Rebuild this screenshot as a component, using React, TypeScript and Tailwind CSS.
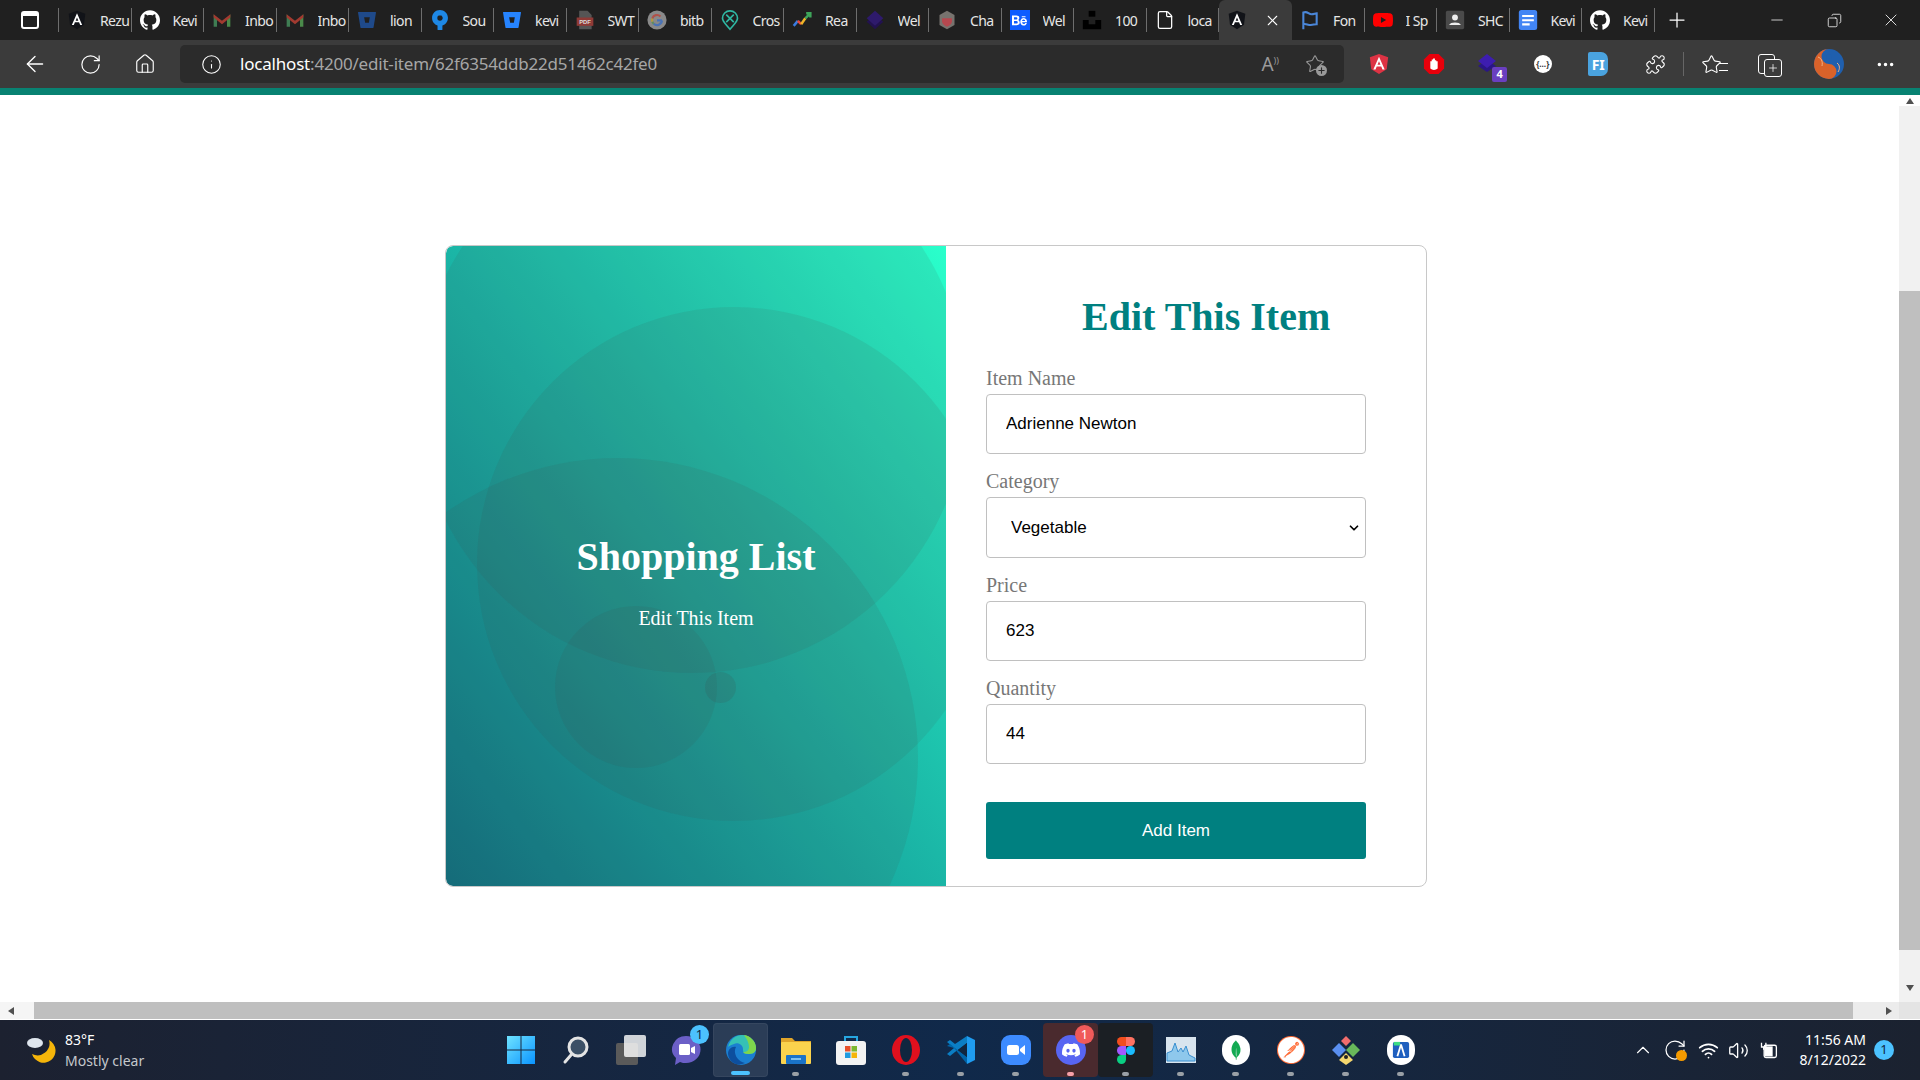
import type { ReactNode } from 'react'
import {
  ArrowLeft,
  ChevronDown,
  ChevronUp,
  Copy,
  File,
  Home,
  Info,
  Minus,
  MoreHorizontal,
  Plus,
  Puzzle,
  RotateCw,
  Star,
  Volume2,
  Wifi,
  X,
} from 'lucide-react'
import { SiBehance, SiBitbucket, SiDiscord, SiGithub, SiMongodb, SiPostman, SiSourcetree, SiYoutube } from 'react-icons/si'

function AngularShield({ bg, className }: { bg: string; className: string }) {
  return (
    <svg viewBox="0 0 24 24" className={className}>
      <path d="M12 1L2 4.5l1.6 13.2L12 23l8.4-5.3L22 4.5z" fill={bg} />
      <path d="M12 4l-6.2 14h2.4l1.3-3.2h5l1.3 3.2h2.4zM10.4 12.8L12 8.9l1.6 3.9z" fill="#fff" />
    </svg>
  )
}

function AngularMono() {
  return <AngularShield bg="#111318" className="h-[22px] w-[20px]" />
}

function Gmail() {
  return (
    <svg viewBox="0 0 24 24" className="h-[20px] w-[20px]">
      <path d="M2 5v15h4V10z" fill="#3f7d53" />
      <path d="M22 5v15h-4V10z" fill="#4a8a4a" />
      <path d="M2 5l10 8 10-8v4l-10 8L2 9z" fill="#a23a30" />
    </svg>
  )
}

function BucketIcon({ color }: { color: string }) {
  return <SiBitbucket className="h-[18px] w-[18px]" style={{ color }} />
}

function PdfIcon() {
  return (
    <svg viewBox="0 0 24 24" className="h-[20px] w-[20px]">
      <path d="M5 1h10l5 5v17H5z" fill="#555" />
      <rect x="2" y="9" width="20" height="10" fill="#8f3a36" />
      <text x="12" y="17" fontSize="7" fontWeight="700" textAnchor="middle" fill="#ddd" fontFamily="Liberation Sans">PDF</text>
    </svg>
  )
}

function GoogleDim() {
  return (
    <svg viewBox="0 0 24 24" className="h-[20px] w-[20px]">
      <circle cx="12" cy="12" r="11.5" fill="#8a8a8a" />
      <path d="M18 12.5h-6M18 12.5a6 6 0 0 1-10 4" fill="none" stroke="#4b73b5" strokeWidth="2.6" />
      <path d="M8 16.5a6 6 0 0 1-1.6-2.5" fill="none" stroke="#5d8c5f" strokeWidth="2.6" />
      <path d="M6.4 14a6 6 0 0 1 0-4" fill="none" stroke="#b59a3e" strokeWidth="2.6" />
      <path d="M6.4 10a6 6 0 0 1 9.8-2.3" fill="none" stroke="#b0524a" strokeWidth="2.6" />
    </svg>
  )
}

function CrossIcon() {
  return (
    <svg viewBox="0 0 24 24" className="h-[22px] w-[22px]" fill="none" stroke="#2fb7a3" strokeWidth="2">
      <path d="M12 23C7 17 3 14 3 10a9 9 0 0 1 18 0c0 4-4 7-9 13z" />
      <path d="M7.5 5.5l9 9M16.5 5.5l-9 9" />
    </svg>
  )
}

function TrendIcon() {
  return (
    <svg viewBox="0 0 24 24" className="h-[20px] w-[20px]" fill="none" strokeWidth="3">
      <path d="M2 19l5-6" stroke="#3a7be0" />
      <path d="M7 13l4 4" stroke="#e8463a" />
      <path d="M11 17l5-7" stroke="#f0b429" />
      <path d="M16 10l6-6M17 4h5v5" stroke="#3ea55a" />
    </svg>
  )
}

function LayersIcon() {
  return (
    <svg viewBox="0 0 24 24" className="h-[22px] w-[22px]">
      <path d="M12 6l10 8-10 9-10-9z" fill="#22124f" />
      <path d="M12 1l10 9-10 9-10-9z" fill="#2e1a6b" />
    </svg>
  )
}

function HexIcon() {
  return (
    <svg viewBox="0 0 24 24" className="h-[22px] w-[22px]">
      <path d="M12 1l9 5v12l-9 5-9-5V6z" fill="#77736e" />
      <path d="M6 10h12v3c0 4-3 6-6 7-3-1-6-3-6-7z" fill="#b5484f" />
    </svg>
  )
}

function HundredIcon() {
  return (
    <svg viewBox="0 0 24 24" className="h-[20px] w-[20px]">
      <rect x="8" y="1" width="8" height="7" fill="#000" />
      <path d="M1 12h7v5h8v-5h7v11H1z" fill="#000" />
    </svg>
  )
}

function FlagIcon() {
  return (
    <svg viewBox="0 0 24 24" className="h-[20px] w-[20px]" fill="none" stroke="#4a86d8" strokeWidth="2.5">
      <path d="M4 23V3c5-2 6 2 10 2 3 0 4-1 6-1v13c-3 0-4 1-7 1-4 0-6-2-9-1" />
    </svg>
  )
}

function ContactIcon() {
  return (
    <svg viewBox="0 0 24 24" className="h-[20px] w-[20px]">
      <rect x="1" y="1" width="22" height="22" rx="2" fill="#4a4a4a" />
      <circle cx="12" cy="9" r="3.5" fill="#eee" />
      <path d="M5 18c1-4 13-4 14 0z" fill="#eee" />
    </svg>
  )
}

function DocsIcon() {
  return (
    <svg viewBox="0 0 24 24" className="h-[22px] w-[22px]">
      <rect x="1" y="0" width="22" height="24" rx="3" fill="#4285f4" />
      <path d="M5 6h14v2.5H5zM5 11h14v2.5H5zM5 16h9v2.5H5z" fill="#fff" />
    </svg>
  )
}

type Tab = { icon: ReactNode; title?: string }

const tabsLeft: Tab[] = [
  { icon: <AngularMono />, title: 'Rezu' },
  { icon: <SiGithub className="h-[20px] w-[20px] text-white" />, title: 'Kevi' },
  { icon: <Gmail />, title: 'Inbo' },
  { icon: <Gmail />, title: 'Inbo' },
  { icon: <BucketIcon color="#1f4a8a" />, title: 'lion' },
  { icon: <SiSourcetree className="h-[20px] w-[20px] text-[#1e88e5]" />, title: 'Sou' },
  { icon: <BucketIcon color="#2684ff" />, title: 'kevi' },
  { icon: <PdfIcon />, title: 'SWT' },
  { icon: <GoogleDim />, title: 'bitb' },
  { icon: <CrossIcon />, title: 'Cros' },
  { icon: <TrendIcon />, title: 'Rea' },
  { icon: <LayersIcon />, title: 'Wel' },
  { icon: <HexIcon />, title: 'Cha' },
  {
    icon: (
      <span className="flex h-[20px] w-[20px] items-center justify-center bg-[#0d5cff]">
        <SiBehance className="h-[15px] w-[15px] text-white" />
      </span>
    ),
    title: 'Wel',
  },
  { icon: <HundredIcon />, title: '100' },
  { icon: <File className="h-[22px] w-[20px] text-white" strokeWidth={1.5} />, title: 'loca' },
]

const tabsRight: Tab[] = [
  { icon: <FlagIcon />, title: 'Fon' },
  { icon: <SiYoutube className="h-[20px] w-[20px] text-[#f00]" />, title: 'I Sp' },
  { icon: <ContactIcon />, title: 'SHC' },
  { icon: <DocsIcon />, title: 'Kevi' },
  { icon: <SiGithub className="h-[20px] w-[20px] text-white" />, title: 'Kevi' },
]

function TabItem({ tab }: { tab: Tab }) {
  return (
    <div className="flex h-[40px] w-[72.5px] shrink-0 items-center pl-[8px]">
      <span className="flex w-[20px] shrink-0 justify-center">{tab.icon}</span>
      <span className="ml-[13px] w-[30px] overflow-hidden whitespace-nowrap text-[14px] tracking-[-0.6px] text-[#e6e6e6]">{tab.title}</span>
      <span className="ml-[1px] h-[24px] w-px shrink-0 bg-[#6e6e6e]" />
    </div>
  )
}

function TabStrip() {
  return (
    <div className="flex h-[40px] shrink-0 items-center bg-[#202020]">
      <div className="flex h-[40px] w-[59px] shrink-0 items-center">
        <span className="ml-[21px] h-[18px] w-[18px] rounded-[3px] border-2 border-white">
          <span className="block h-[3px] bg-white" />
        </span>
        <span className="ml-[19px] h-[24px] w-px bg-[#6e6e6e]" />
      </div>
      {tabsLeft.map((tab, i) => (
        <TabItem key={i} tab={tab} />
      ))}
      <div className="flex h-[40px] w-[73px] shrink-0 items-center rounded-t-[6px] bg-[#3b3b3b] pl-[8px]">
        <AngularMono />
        <X className="ml-[17px] h-[17px] w-[17px] text-white" strokeWidth={1.5} />
      </div>
      {tabsRight.map((tab, i) => (
        <TabItem key={i} tab={tab} />
      ))}
      <Plus className="ml-[10px] h-[24px] w-[24px] text-white" strokeWidth={1.25} />
      <div className="ml-auto flex items-center">
        <Minus className="h-[18px] w-[18px] text-white" strokeWidth={1} />
        <Copy className="ml-[41px] h-[15px] w-[15px] scale-x-[-1] text-white" strokeWidth={1.25} />
        <X className="ml-[39px] mr-[19px] h-[20px] w-[20px] text-white" strokeWidth={1} />
      </div>
    </div>
  )
}

function ExtIcon({ children }: { children: ReactNode }) {
  return <span className="flex w-[54.5px] shrink-0 justify-center">{children}</span>
}

function ProfileOrb() {
  return (
    <svg viewBox="0 0 30 30" className="ml-[39px] h-[30px] w-[30px]">
      <circle cx="15" cy="15" r="15" fill="#1f5fae" />
      <path d="M15 0a15 15 0 0 0 0 30 7.5 7.5 0 0 0 0-15 7.5 7.5 0 0 1 0-15z" fill="#d9622a" />
      <circle cx="15" cy="7.5" r="2.5" fill="#1f5fae" />
      <circle cx="15" cy="22.5" r="2.5" fill="#d9622a" />
      <path d="M4 8c3 1 5 4 4 9M23 14c3 2 3 6 1 9" fill="none" stroke="#f4b183" strokeWidth="1" />
    </svg>
  )
}

function Toolbar() {
  return (
    <div className="flex h-[48px] shrink-0 items-center bg-[#3b3b3b]">
      <ArrowLeft className="ml-[22px] h-[26px] w-[26px] text-white" strokeWidth={1.25} />
      <RotateCw className="ml-[31px] h-[23px] w-[23px] text-white" strokeWidth={1.25} />
      <Home className="ml-[32px] h-[22px] w-[22px] text-white" strokeWidth={1.25} />
      <div className="ml-[24px] flex h-[38px] w-[1164px] shrink-0 items-center rounded-[5px] bg-[#2b2b2b]">
        <Info className="ml-[21px] h-[21px] w-[21px] text-white" strokeWidth={1.25} />
        <span className="ml-[18px] whitespace-nowrap font-['Noto_Sans',sans-serif] text-[17px] tracking-[-0.2px] text-[#a6a6a6]">
          <span className="text-white">localhost</span>:4200/edit-item/62f6354ddb22d51462c42fe0
        </span>
        <span className="ml-auto text-[19px] leading-none text-[#9a9a9a]">A<span className="align-super text-[9px]">))</span></span>
        <span className="relative ml-[26px] mr-[19px]">
          <Star className="h-[20px] w-[20px] text-[#9a9a9a]" strokeWidth={1.25} />
          <span className="absolute -right-[2px] -bottom-[2px] flex h-[11px] w-[11px] items-center justify-center rounded-full bg-[#9a9a9a]">
            <Plus className="h-[9px] w-[9px] text-[#2b2b2b]" strokeWidth={3} />
          </span>
        </span>
      </div>
      <div className="ml-[8px] flex items-center">
        <ExtIcon>
          <AngularShield bg="#dd3344" className="h-[24px] w-[22px]" />
        </ExtIcon>
        <ExtIcon>
          <svg viewBox="0 0 24 24" className="h-[22px] w-[22px]">
            <path d="M7 1h10l6 6v10l-6 6H7l-6-6V7z" fill="#e8000b" />
            <path d="M8 17V9h1.5v-2H11v-1h2v2h1.5v1H16v8c-2 2-6 2-8 0z" fill="#fff" />
          </svg>
        </ExtIcon>
        <ExtIcon>
          <span className="relative">
            <svg viewBox="0 0 24 24" className="h-[24px] w-[24px]">
              <path d="M2 14l9-6 9 6-9 6z" fill="#2a1685" />
              <path d="M2 9l9-7 9 7-9 7z" fill="#3d1db0" />
            </svg>
            <span className="absolute -right-[7px] -bottom-[6px] flex h-[15px] w-[15px] items-center justify-center rounded-[2px] bg-[#6a3fc0] text-[11px] font-bold text-white">4</span>
          </span>
        </ExtIcon>
        <ExtIcon>
          <span className="flex h-[18px] w-[18px] items-center justify-center rounded-full bg-white text-[8px] font-bold text-[#333]">{'{…}'}</span>
        </ExtIcon>
        <ExtIcon>
          <span className="ml-[2px] flex h-[24px] w-[20px] items-center justify-center rounded-l-[2px] rounded-r-[7px] bg-[#4aa3df] text-[14px] font-bold text-white">FI</span>
        </ExtIcon>
        <ExtIcon>
          <Puzzle className="ml-[7px] h-[21px] w-[21px] text-white" strokeWidth={1.25} />
        </ExtIcon>
        <span className="mx-[4px] h-[24px] w-px bg-[#666]" />
        <span className="relative ml-[13px]">
          <Star className="h-[21px] w-[21px] text-white" strokeWidth={1.25} />
          <span className="absolute -right-[6px] top-[9px] h-[8px] w-[9px] border-y border-white" />
        </span>
        <span className="relative ml-[36px]">
          <span className="block h-[20px] w-[17px] rounded-[3px] border border-white" />
          <span className="absolute top-[5px] left-[6px] flex h-[18px] w-[18px] items-center justify-center rounded-[3px] border border-white bg-[#3b3b3b]">
            <Plus className="h-[12px] w-[12px] text-white" strokeWidth={1.5} />
          </span>
        </span>
        <ProfileOrb />
        <MoreHorizontal className="ml-[31px] h-[21px] w-[21px] text-white" strokeWidth={2} />
      </div>
    </div>
  )
}

function Field({ label, children }: { label: string; children: ReactNode }) {
  return (
    <div className="mb-[15px]">
      <label className="mb-[4px] block h-[24px] text-[20px] leading-[24px] text-[#777]">{label}</label>
      {children}
    </div>
  )
}

const inputClass =
  "block h-[60px] w-[380px] rounded-[4px] border border-[#c0c0c0] bg-white pl-[19px] font-['Liberation_Sans',sans-serif] text-[17px] text-black"

function EditCard() {
  return (
    <div className="ml-[445px] mt-[150px] flex h-[642px] w-[982px] overflow-hidden rounded-[8px] border border-[#c8c8c8] bg-white font-['Liberation_Serif',serif]">
      <div className="relative h-[640px] w-[500px] shrink-0 overflow-hidden rounded-l-[7px] bg-linear-to-tr from-[#107080] to-[#2affcb]">
        <span className="absolute left-[-29px] top-[-123px] h-[550px] w-[550px] rounded-full bg-[#444]/10" />
        <span className="absolute left-[31px] top-[61px] h-[514px] w-[514px] rounded-full bg-[#444]/10" />
        <span className="absolute left-[-128px] top-[212px] h-[600px] w-[600px] rounded-full bg-[#444]/10" />
        <span className="absolute left-[109px] top-[360px] h-[162px] w-[162px] rounded-full bg-[#444]/10" />
        <span className="absolute left-[259px] top-[426px] h-[31px] w-[31px] rounded-full bg-[#444]/15" />
        <div className="relative flex flex-col items-center pt-[288px] text-white">
          <h1 className="text-[40px] font-bold leading-[46px]">Shopping List</h1>
          <p className="mt-[26px] text-[20px] leading-[24px]">Edit This Item</p>
        </div>
      </div>
      <form className="pl-[40px] pt-[48px]">
        <h2 className="mb-[26px] ml-[96px] text-[40px] font-bold leading-[46px] text-[#008080]">Edit This Item</h2>
        <Field label="Item Name">
          <input className={inputClass} defaultValue="Adrienne Newton" readOnly />
        </Field>
        <Field label="Category">
          <div className="relative w-[380px]">
            <select className="block h-[61px] w-[380px] appearance-none rounded-[4px] border border-[#c0c0c0] bg-white pl-[24px] font-['Liberation_Sans',sans-serif] text-[17px] text-black" defaultValue="Vegetable">
              <option>Vegetable</option>
              <option>Fruit</option>
            </select>
            <ChevronDown className="pointer-events-none absolute right-[5px] top-[24px] h-[14px] w-[14px] text-black" strokeWidth={3} />
          </div>
        </Field>
        <Field label="Price">
          <input className={inputClass} defaultValue="623" readOnly />
        </Field>
        <Field label="Quantity">
          <input className={inputClass} defaultValue="44" readOnly />
        </Field>
        <button type="button" className="mt-[23px] h-[57px] w-[380px] rounded-[3px] bg-[#008080] font-['Liberation_Sans',sans-serif] text-[17px] text-white">
          Add Item
        </button>
      </form>
    </div>
  )
}

function ScrollTriangle({ dir }: { dir: 'up' | 'down' | 'left' | 'right' }) {
  const points = {
    up: '5,2 9,8 1,8',
    down: '1,2 9,2 5,8',
    left: '8,1 8,9 2,5',
    right: '2,1 8,5 2,9',
  }[dir]
  return (
    <svg viewBox="0 0 10 10" className="h-[10px] w-[10px]">
      <polygon points={points} fill="#505050" />
    </svg>
  )
}

function VerticalScrollbar() {
  return (
    <div className="flex w-[21px] shrink-0 flex-col bg-[#f1f1f1]">
      <div className="flex h-[11px] items-center justify-center bg-white">
        <ScrollTriangle dir="up" />
      </div>
      <div className="mt-[185px] h-[659px] bg-[#bfbfbf]" />
      <div className="mt-auto mb-[6px] flex h-[17px] items-center justify-center">
        <ScrollTriangle dir="down" />
      </div>
    </div>
  )
}

function HorizontalScrollbar() {
  return (
    <div className="flex h-[18px] shrink-0 border-b border-white bg-[#ececec]">
      <div className="flex w-[34px] items-center justify-center bg-[#f5f5f5] pr-[12px]">
        <ScrollTriangle dir="left" />
      </div>
      <div className="w-[1819px] bg-[#bfbfbf]" />
      <div className="flex w-[46px] items-center justify-end pr-[5px]">
        <ScrollTriangle dir="right" />
      </div>
      <div className="w-[21px] bg-[#e4e4e4]" />
    </div>
  )
}

function WinLogo() {
  return (
    <svg viewBox="0 0 30 30" className="h-[30px] w-[30px]">
      <defs>
        <linearGradient id="winGrad" x1="0" y1="0" x2="1" y2="1">
          <stop offset="0" stopColor="#6fe3ff" />
          <stop offset="1" stopColor="#0a94ff" />
        </linearGradient>
      </defs>
      <path d="M1 1h13.5v13.5H1zM15.5 1H29v13.5H15.5zM1 15.5h13.5V29H1zM15.5 15.5H29V29H15.5z" fill="url(#winGrad)" />
    </svg>
  )
}

function EdgeLogo() {
  return (
    <svg viewBox="0 0 30 30" className="h-[30px] w-[30px]">
      <circle cx="15" cy="15" r="15" fill="#1b7fd0" />
      <path d="M2 12C4 4 10 0 16 0c8 0 14 6 14 13 0 5-4 6-8 6-5 0-5-3-5-5 0-4-5-7-9-5-3 1-5 2-6 3z" fill="#35c1b5" />
      <path d="M18 0c7 1 12 7 12 13 0 5-4 6-8 6-3 0-4-1-5-2 4 0 6-2 6-5 0-5-3-9-5-12z" fill="#7fd64c" />
      <path d="M10 12c-3 5 0 14 9 16-8 4-16-1-17-9 0-5 4-8 8-7z" fill="#0d4f9e" />
    </svg>
  )
}

function FilesLogo() {
  return (
    <svg viewBox="0 0 30 30" className="h-[30px] w-[30px]">
      <path d="M0 3h11l3 3h16v5H0z" fill="#e0a52a" />
      <rect x="0" y="7" width="30" height="22" rx="1" fill="#fbd34d" />
      <rect x="5" y="20" width="20" height="9" rx="1" fill="#1a73c8" />
      <rect x="10" y="23" width="10" height="2" fill="#7cc0f0" />
    </svg>
  )
}

function StoreLogo() {
  return (
    <svg viewBox="0 0 30 30" className="h-[30px] w-[30px]">
      <path d="M9 7V2h12v5" fill="none" stroke="#26a6e0" strokeWidth="2" />
      <rect x="0" y="6" width="30" height="24" rx="3" fill="#f3f3f3" />
      <rect x="9" y="11" width="5.5" height="5.5" fill="#e8502a" />
      <rect x="15.5" y="11" width="5.5" height="5.5" fill="#7cb82f" />
      <rect x="9" y="17.5" width="5.5" height="5.5" fill="#1f9be0" />
      <rect x="15.5" y="17.5" width="5.5" height="5.5" fill="#f5b50a" />
    </svg>
  )
}

function OperaLogo() {
  return (
    <svg viewBox="0 0 30 30" className="h-[30px] w-[30px]">
      <ellipse cx="15" cy="15" rx="14" ry="15" fill="#e0101e" />
      <ellipse cx="15" cy="15" rx="6" ry="12" fill="#10263f" />
    </svg>
  )
}

function VsCodeLogo() {
  return (
    <svg viewBox="0 0 30 30" className="h-[30px] w-[30px]">
      <path d="M21 1l8 4v20l-8 4z" fill="#1f9cf0" />
      <path d="M21 1v7L9 17l-5 4-3-2 7-6-7-6 3-2 5 4z" fill="#0b7ec4" />
      <path d="M21 29v-7L9 13l-5-4-3 2 7 2z" fill="#0065a9" />
      <path d="M21 8v14l-9-7z" fill="#10263f" />
    </svg>
  )
}

function ZoomLogo() {
  return (
    <svg viewBox="0 0 30 30" className="h-[30px] w-[30px]">
      <rect width="30" height="30" rx="9" fill="#3d8bff" />
      <rect x="6" y="10" width="12" height="10" rx="2.5" fill="#fff" />
      <path d="M19 14l5-4v10l-5-4z" fill="#fff" />
    </svg>
  )
}

function ChatLogo() {
  return (
    <svg viewBox="0 0 30 30" className="h-[30px] w-[30px]">
      <path d="M15 1a14 13 0 0 1 0 27c-2 0-4 0-6-1l-5 3 1-7A14 13 0 0 1 15 1z" fill="#6b5fc7" />
      <rect x="8" y="9" width="11" height="11" rx="1.5" fill="#fff" />
      <path d="M20 13l4-2v8l-4-2z" fill="#fff" />
    </svg>
  )
}

function FigmaLogo() {
  return (
    <svg viewBox="0 0 20 30" className="h-[27px] w-[20px]">
      <path d="M5 0h5v10H5A5 5 0 0 1 5 0z" fill="#f24e1e" />
      <path d="M10 0h5a5 5 0 0 1 0 10h-5z" fill="#ff7262" />
      <path d="M5 10h5v10H5a5 5 0 0 1 0-10z" fill="#a259ff" />
      <circle cx="15" cy="15" r="5" fill="#1abcfe" />
      <path d="M5 20h5v5a5 5 0 1 1-5-5z" fill="#0acf83" />
    </svg>
  )
}

function MonitorLogo() {
  return (
    <svg viewBox="0 0 30 30" className="h-[30px] w-[30px]">
      <rect x="0" y="2" width="30" height="26" fill="#d8e4ee" />
      <path d="M1 26V18l5-2 3-8 3 9 3-4 2 4 3-6 3 9 6 3v3z" fill="#8ec8ec" stroke="#3a8fd0" strokeWidth="1" />
    </svg>
  )
}

function GitKrakenLogo() {
  return (
    <svg viewBox="0 0 30 30" className="h-[30px] w-[30px]">
      <path d="M15 1l5 5-5 5-5-5z" fill="#f26d6d" />
      <path d="M8 8l7 7-7 7-7-7z" fill="#5a8ff0" />
      <path d="M22 8l7 7-7 7-7-7z" fill="#69b85a" />
      <path d="M15 18l7 7-7 5-7-5z" fill="#f5d76e" />
      <circle cx="15" cy="22" r="2" fill="#222" />
    </svg>
  )
}

function AndroidStudioLogo() {
  return (
    <span className="flex h-[30px] w-[28px] items-center justify-center rounded-full bg-white">
      <svg viewBox="0 0 20 20" className="h-[20px] w-[18px]">
        <rect x="1" y="1" width="18" height="18" rx="2" fill="#1f5fbf" />
        <path d="M10 4l-4 13M10 4l4 13" stroke="#fff" strokeWidth="2" />
        <rect x="2" y="1" width="7" height="4" fill="#3ddc84" />
      </svg>
    </span>
  )
}

type TaskItem = { icon: ReactNode; open?: boolean; badge?: string; badgeColor?: string; mark?: string; box?: string }

const taskItems: TaskItem[] = [
  { icon: <WinLogo /> },
  {
    icon: (
      <svg viewBox="0 0 30 30" className="h-[30px] w-[30px]" fill="#3c5066" stroke="#e4e4e4" strokeWidth="3">
        <circle cx="17" cy="12" r="9" />
        <path d="M10 20l-6 7" strokeLinecap="round" fill="none" />
      </svg>
    ),
  },
  {
    icon: (
      <span className="relative block h-[30px] w-[30px]">
        <span className="absolute bottom-0 left-0 h-[22px] w-[22px] rounded-[2px] bg-[#5a5a5a]" />
        <span className="absolute right-0 top-0 h-[22px] w-[22px] rounded-[2px] bg-white/80" />
      </span>
    ),
  },
  { icon: <ChatLogo />, badge: '1', badgeColor: 'bg-[#4cc2ff] text-[#10263f]' },
  { icon: <EdgeLogo />, open: true, mark: 'w-[19px] bg-[#4cc2ff]', box: 'bg-white/10 border border-white/5' },
  { icon: <FilesLogo />, open: true },
  { icon: <StoreLogo /> },
  { icon: <OperaLogo />, open: true },
  { icon: <VsCodeLogo />, open: true },
  { icon: <ZoomLogo />, open: true },
  {
    icon: (
      <span className="flex h-[30px] w-[30px] items-center justify-center rounded-full bg-[#5865f2]">
        <SiDiscord className="h-[18px] w-[18px] text-white" />
      </span>
    ),
    open: true,
    badge: '1',
    badgeColor: 'bg-[#f05a5a] text-white',
    mark: 'w-[7px] bg-[#f7a0a8]',
    box: 'bg-[#4a2a2e]',
  },
  { icon: <FigmaLogo />, open: true, box: 'bg-[#1b1f24]' },
  { icon: <MonitorLogo />, open: true },
  {
    icon: (
      <span className="flex h-[30px] w-[28px] items-center justify-center rounded-full bg-white">
        <SiMongodb className="h-[20px] w-[20px] text-[#13aa52]" />
      </span>
    ),
    open: true,
  },
  {
    icon: (
      <span className="flex h-[28px] w-[28px] items-center justify-center rounded-full bg-[#ff6c37]">
        <SiPostman className="h-[26px] w-[26px] text-white" />
      </span>
    ),
    open: true,
  },
  { icon: <GitKrakenLogo />, open: true },
  { icon: <AndroidStudioLogo />, open: true },
]

function Taskbar() {
  return (
    <div className="relative flex h-[60px] shrink-0 items-center bg-linear-to-r from-[#1c2130] via-[#10294a] to-[#1b2230] font-['Noto_Sans',sans-serif] text-white">
      <div className="ml-[26px] flex w-[467px] items-center">
        <svg viewBox="0 0 30 30" className="h-[30px] w-[30px]">
          <path d="M19 5a12 12 0 0 1-17 14A12 12 0 1 0 19 5z" fill="#f5b50a" transform="translate(4 0)" />
          <ellipse cx="9" cy="8" rx="8" ry="5" fill="#dfe6ee" />
        </svg>
        <div className="ml-[9px] text-[14px] leading-[21px]">
          <div>83°F</div>
          <div className="text-[#c4c8cc]">Mostly clear</div>
        </div>
      </div>
      <div className="flex items-center">
        {taskItems.map((item, i) => (
          <div key={i} className={`relative flex h-[54px] w-[55px] shrink-0 items-center justify-center rounded-[4px] ${item.box ?? ''}`}>
            {item.icon}
            {item.badge && (
              <span className={`absolute right-[4px] top-[2px] flex h-[19px] w-[19px] items-center justify-center rounded-full text-[13px] ${item.badgeColor}`}>
                {item.badge}
              </span>
            )}
            {(item.open || item.mark) && (
              <span className={`absolute bottom-[1px] h-[4px] rounded-full ${item.mark ?? 'w-[7px] bg-[#9aa0a6]'}`} />
            )}
          </div>
        ))}
      </div>
      <div className="ml-auto flex items-center">
        <ChevronUp className="h-[22px] w-[22px] text-white" strokeWidth={1.25} />
        <span className="relative ml-[9px] h-[24px] w-[24px]">
          <RotateCw className="h-[24px] w-[24px] text-white" strokeWidth={1.25} />
          <span className="absolute bottom-[1px] right-0 h-[11px] w-[11px] rounded-full bg-[#f59b00]" />
        </span>
        <Wifi className="ml-[11px] h-[21px] w-[21px] text-white" strokeWidth={2} />
        <Volume2 className="ml-[9px] h-[21px] w-[21px] text-white" strokeWidth={1.5} />
        <svg viewBox="0 0 24 24" className="ml-[9px] h-[21px] w-[21px]" fill="none" stroke="#fff" strokeWidth="1.5">
          <rect x="7" y="6" width="14" height="14" rx="2" />
          <rect x="8" y="8" width="8" height="10" fill="#fff" />
          <path d="M4 3v5h5V3M6.5 8v3" />
        </svg>
        <div className="ml-[21px] text-right text-[14px] leading-[20px]">
          <div>11:56 AM</div>
          <div>8/12/2022</div>
        </div>
        <span className="ml-[8px] mr-[26px] flex h-[20px] w-[20px] items-center justify-center rounded-full bg-[#4cc2ff] text-[13px] text-[#10263f]">1</span>
      </div>
    </div>
  )
}

export default function App() {
  return (
    <div className="flex h-screen w-full flex-col overflow-hidden bg-white font-['Noto_Sans',sans-serif]">
      <TabStrip />
      <Toolbar />
      <div className="h-[7px] shrink-0 bg-[#088272]" />
      <div className="flex min-h-0 flex-1">
        <main className="min-w-0 flex-1 overflow-hidden bg-white">
          <EditCard />
        </main>
        <VerticalScrollbar />
      </div>
      <HorizontalScrollbar />
      <Taskbar />
    </div>
  )
}
